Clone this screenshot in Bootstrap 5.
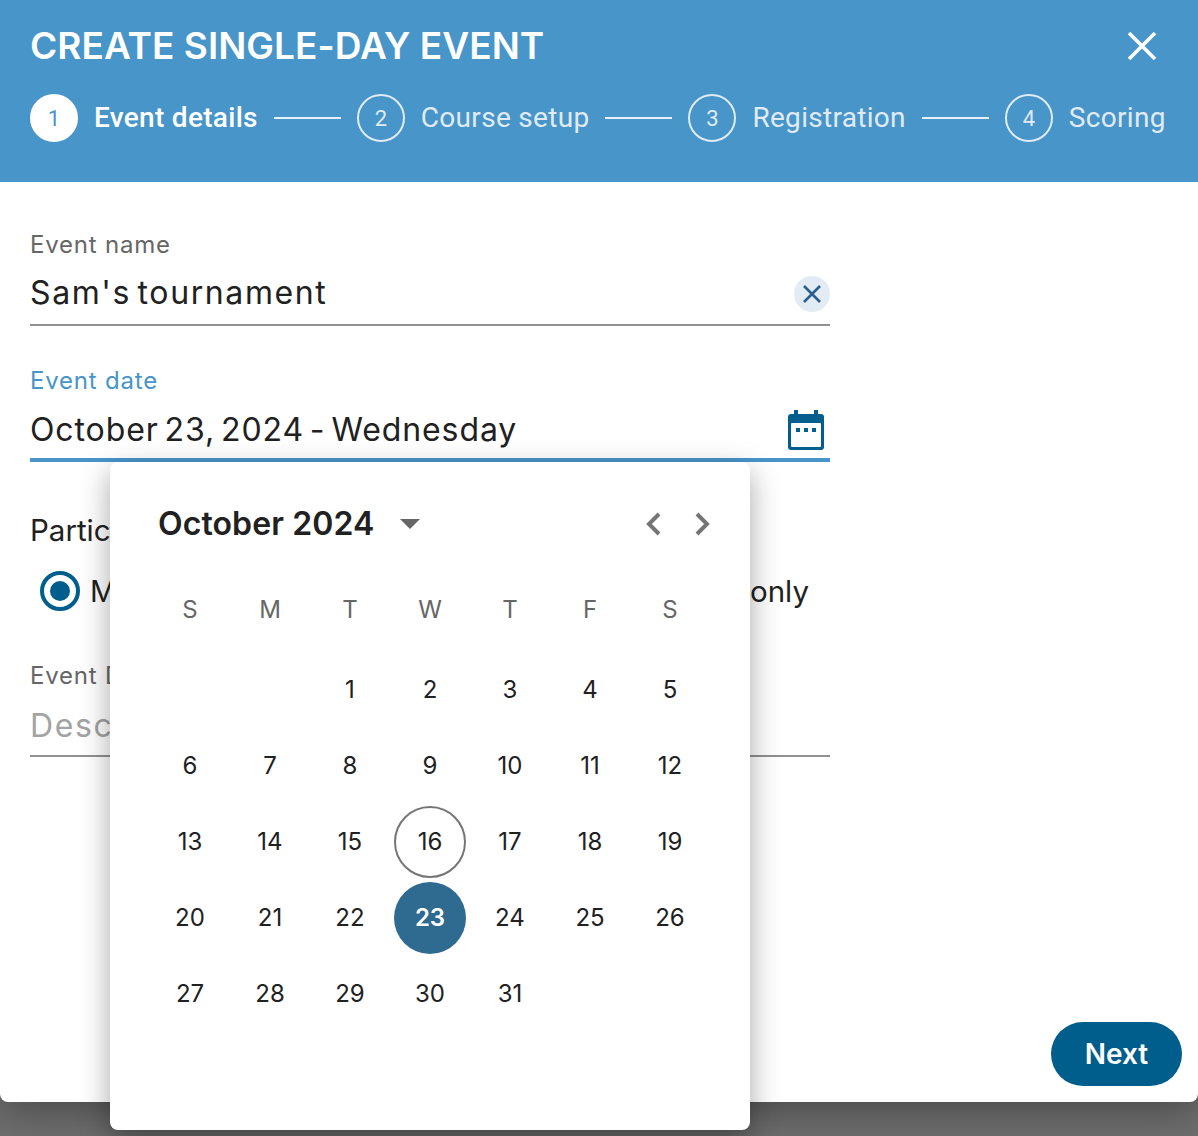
<!DOCTYPE html>
<html lang="en">
<head>
    <meta charset="UTF-8">
    <meta name="viewport" content="width=device-width, initial-scale=1.0">
    <title>Create single-day event</title>
    <link href="https://cdn.jsdelivr.net/npm/bootstrap@5.3.0/dist/css/bootstrap.min.css" rel="stylesheet">
    <style>
        html, body { height: 100%; }
        body { background: #6e6e6e; overflow: hidden; font-family: Inter, "Liberation Sans", sans-serif; color: #212121; }
        .sheet { height: 1102px; background: #fff; border-radius: 0 0 8px 8px; box-shadow: 0 8px 40px rgba(0,0,0,.35); }
        .sheet-head { height: 182px; background: #4795c9; padding: 24px 30px 0; color: #fff; }
        .sheet-title { font-size: 37px; font-weight: 600; line-height: 44px; margin: 0; letter-spacing: .03px; }
        .close-x { background: none; border: 0; padding: 0; width: 32px; height: 32px; margin-right: 10px; line-height: 0; }
        .stepper { margin-top: 26px; gap: 16px; font-family: Roboto, sans-serif; font-size: 28px; letter-spacing: .3px; color: #e0ebf5; }
        .step-no { width: 48px; height: 48px; border: 2px solid #e0ebf5; border-radius: 50%; font-size: 22px; letter-spacing: 0; display: flex; align-items: center; justify-content: center; flex: none; }
        .step-on { color: #fff; font-weight: 500; }
        .step-on .step-no { background: #fff; border-color: #fff; color: #4795c9; font-weight: 400; }
        .step-line { width: 67px; height: 2px; background: #e8f0f7; flex: none; }
        .sheet-body { padding: 48px 30px 0; width: 860px; }
        .fld-label { font-size: 24px; line-height: 30px; color: #666; margin: 0; display: block; letter-spacing: .8px; }
        .fld-row { height: 66px; border-bottom: 2px solid #919191; font-size: 32px; padding-top: 1px; }
        .fld-row input { border: 0; outline: 0; padding: 0; width: 100%; background: none; color: #212121; font-size: 32px; letter-spacing: 1.6px; word-spacing: -4px; }
        .fld-row input::placeholder { color: #a3a3a3; opacity: 1; }
        .fld-date { margin-top: 40px; }
        .fld-date .fld-label { color: #4795c9; }
        .fld-date .fld-row { border-bottom: 4px solid #4795c9; padding-top: 5px; }
        .fld-date .fld-row input { letter-spacing: .9px; word-spacing: -4px; }
        .cal-icon { margin-right: 6px; margin-top: 1px; }
        .clear-btn { width: 36px; height: 36px; border-radius: 50%; background: #e3ecf5; border: 0; padding: 0; margin-top: 2px; flex: none; line-height: 0; }
        .group-title { margin: 48px 0 0; font-size: 29.5px; line-height: 40px; font-weight: 400; }
        .radio-row { margin-top: 17px; height: 48px; padding: 0 21px 0 10px; font-size: 29.5px; gap: 60px; }
        .radio-dot { width: 40px; height: 40px; border-radius: 50%; border: 4px solid #005e8c; flex: none; display: flex; align-items: center; justify-content: center; margin-right: 2px; }
        .radio-dot::after { content: ""; width: 20px; height: 20px; border-radius: 50%; background: #005e8c; }
        .radio-off::after { display: none; }
        .fld-desc { margin-top: 46px; }
        .fld-desc .fld-row { padding-top: 5px; }
        .next-btn { width: 131px; height: 64px; border-radius: 32px; background: #005e8c; color: #fff; border: 0; font-size: 28px; font-weight: 600; }
        .next-btn:hover { background: #005e8c; color: #fff; }
        .sheet-foot { padding-right: 16px; margin-top: 265px; }
        .picker { position: absolute; left: 110px; top: 462px; width: 640px; height: 668px; background: #fff; border-radius: 8px; box-shadow: 0 10px 30px rgba(0,0,0,.35); padding: 40px 40px 0; }
        .picker-head { height: 44px; padding: 0 8px; }
        .picker-month { font-size: 32px; font-weight: 600; letter-spacing: .1px; line-height: 44px; }
        .caret-down { width: 0; height: 0; border-left: 10px solid transparent; border-right: 10px solid transparent; border-top: 10px solid #666; margin-left: 26px; }
        .picker-nav { gap: 24px; margin-right: -12px; }
        .picker-nav svg { display: block; }
        .day-grid { display: grid; grid-template-columns: repeat(7, 80px); grid-template-rows: 80px; grid-auto-rows: 76px; margin-top: 26px; font-size: 24px; }
        .day-cell { width: 72px; height: 72px; margin: 2px 4px; border-radius: 50%; display: flex; align-items: center; justify-content: center; }
        .day-name { color: #666; }
        .day-today { border: 2px solid #757575; }
        .day-sel { background: #2f6a90; color: #fff; font-weight: 600; }
    </style>
</head>
<body class="position-relative">

    <div class="sheet d-flex flex-column">
        <div class="sheet-head">
            <div class="d-flex justify-content-between align-items-center">
                <h1 class="sheet-title">CREATE SINGLE-DAY EVENT</h1>
                <button type="button" class="close-x" aria-label="Close">
                    <svg width="32" height="32" viewBox="0 0 32 32"><path d="M3 3 29 29M29 3 3 29" stroke="#fff" stroke-width="3.6" fill="none"/></svg>
                </button>
            </div>
            <div class="stepper d-flex align-items-center">
                <div class="step-on d-flex align-items-center gap-3"><span class="step-no">1</span><span>Event details</span></div>
                <span class="step-line"></span>
                <div class="d-flex align-items-center gap-3"><span class="step-no">2</span><span>Course setup</span></div>
                <span class="step-line"></span>
                <div class="d-flex align-items-center gap-3"><span class="step-no">3</span><span>Registration</span></div>
                <span class="step-line"></span>
                <div class="d-flex align-items-center gap-3"><span class="step-no">4</span><span>Scoring</span></div>
            </div>
        </div>

        <div class="sheet-body">
            <label class="fld-label">Event name</label>
            <div class="fld-row d-flex align-items-center">
                <input type="text" value="Sam's tournament">
                <button type="button" class="clear-btn" aria-label="Clear">
                    <svg width="36" height="36" viewBox="0 0 36 36"><path d="M10 10 26 26M26 10 10 26" stroke="#2a5f8f" stroke-width="2.6" fill="none"/></svg>
                </button>
            </div>

            <div class="fld-date">
                <label class="fld-label">Event date</label>
                <div class="fld-row d-flex align-items-center">
                    <input type="text" value="October 23, 2024 - Wednesday">
                    <svg class="cal-icon flex-shrink-0" width="36" height="40" viewBox="0 0 36 40">
                        <rect x="6" y="0" width="4" height="6" fill="#005e8c"/>
                        <rect x="26" y="0" width="4" height="6" fill="#005e8c"/>
                        <rect x="0" y="4" width="36" height="36" rx="3" fill="#005e8c"/>
                        <rect x="3" y="13" width="30" height="24" rx="1" fill="#fff"/>
                        <rect x="8" y="18" width="4" height="4" fill="#005e8c"/>
                        <rect x="16" y="18" width="4" height="4" fill="#005e8c"/>
                        <rect x="24" y="18" width="4" height="4" fill="#005e8c"/>
                    </svg>
                </div>
            </div>

            <h2 class="group-title">Participants</h2>
            <div class="radio-row d-flex align-items-center justify-content-between">
                <div class="d-flex align-items-center gap-2"><span class="radio-dot"></span><span>Members and guests</span></div>
                <div class="d-flex align-items-center gap-2"><span class="radio-dot radio-off"></span><span>Members only</span></div>
            </div>

            <div class="fld-desc">
                <label class="fld-label">Event Description</label>
                <div class="fld-row d-flex align-items-center">
                    <input type="text" placeholder="Description">
                </div>
            </div>
        </div>

        <div class="sheet-foot d-flex justify-content-end">
            <button type="button" class="btn next-btn">Next</button>
        </div>
    </div>

    <div class="picker">
        <div class="picker-head d-flex align-items-center">
            <span class="picker-month">October 2024</span>
            <span class="caret-down"></span>
            <div class="picker-nav d-flex ms-auto">
                <svg width="24" height="28" viewBox="0 0 24 28"><path d="M17 4 7 14 17 24" stroke="#757575" stroke-width="4" fill="none"/></svg>
                <svg width="24" height="28" viewBox="0 0 24 28"><path d="M7 4 17 14 7 24" stroke="#757575" stroke-width="4" fill="none"/></svg>
            </div>
        </div>
        <div class="day-grid">
            <div class="day-cell day-name">S</div><div class="day-cell day-name">M</div><div class="day-cell day-name">T</div><div class="day-cell day-name">W</div><div class="day-cell day-name">T</div><div class="day-cell day-name">F</div><div class="day-cell day-name">S</div>
            <div class="day-cell"></div><div class="day-cell"></div><div class="day-cell">1</div><div class="day-cell">2</div><div class="day-cell">3</div><div class="day-cell">4</div><div class="day-cell">5</div>
            <div class="day-cell">6</div><div class="day-cell">7</div><div class="day-cell">8</div><div class="day-cell">9</div><div class="day-cell">10</div><div class="day-cell">11</div><div class="day-cell">12</div>
            <div class="day-cell">13</div><div class="day-cell">14</div><div class="day-cell">15</div><div class="day-cell day-today">16</div><div class="day-cell">17</div><div class="day-cell">18</div><div class="day-cell">19</div>
            <div class="day-cell">20</div><div class="day-cell">21</div><div class="day-cell">22</div><div class="day-cell day-sel">23</div><div class="day-cell">24</div><div class="day-cell">25</div><div class="day-cell">26</div>
            <div class="day-cell">27</div><div class="day-cell">28</div><div class="day-cell">29</div><div class="day-cell">30</div><div class="day-cell">31</div>
        </div>
    </div>

    <script src="https://cdn.jsdelivr.net/npm/bootstrap@5.3.0/dist/js/bootstrap.bundle.min.js"></script>
</body>
</html>
